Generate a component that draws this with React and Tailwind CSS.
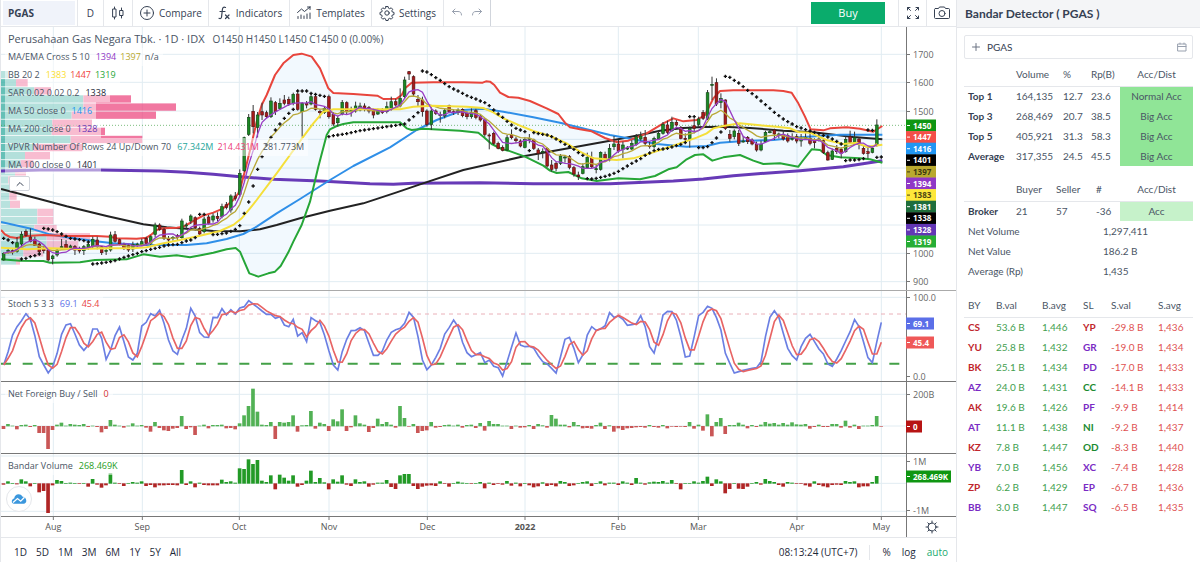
import clsx from "clsx";

// Chart coordinates are thirds of a pixel, one bar every STEP units.
const LEFT = 3;
const WIDTH = 2715;
const STEP = 13.365;
const barX = (i) => 11 + i * STEP;

const months = [
  { x: 160, label: "Aug" },
  { x: 427, label: "Sep" },
  { x: 718, label: "Oct" },
  { x: 987, label: "Nov" },
  { x: 1282, label: "Dec" },
  { x: 1575, label: "2022", bold: true },
  { x: 1855, label: "Feb" },
  { x: 2095, label: "Mar" },
  { x: 2391, label: "Apr" },
  { x: 2644, label: "May" },
];

// open, close, high, low
const candles = [
  [780, 760, 757, 782], [752, 751, 746, 761], [752, 753, 748, 764], [754, 728, 711, 758],
  [732, 703, 694, 740], [694, 706, 688, 710], [711, 724, 685, 727], [719, 736, 710, 738],
  [732, 755, 728, 762], [745, 752, 738, 760], [750, 780, 747, 784], [776, 768, 764, 793],
  [765, 750, 745, 770], [742, 740, 717, 746], [733, 745, 720, 750], [743, 738, 734, 748],
  [740, 750, 735, 765], [746, 753, 740, 760], [752, 740, 735, 765], [743, 733, 725, 750],
  [740, 718, 710, 745], [720, 740, 710, 748], [740, 758, 738, 765], [752, 751, 745, 765],
  [750, 705, 695, 755], [704, 724, 693, 728], [719, 732, 716, 736], [733, 746, 728, 750],
  [736, 750, 733, 756], [747, 733, 725, 756], [734, 732, 728, 742], [733, 725, 716, 738],
  [715, 730, 710, 736], [730, 710, 706, 735], [703, 675, 668, 712], [675, 688, 670, 692],
  [688, 715, 684, 720], [715, 720, 708, 732], [714, 712, 708, 722], [706, 712, 702, 720],
  [713, 663, 656, 716], [676, 675, 668, 688], [663, 648, 643, 672], [653, 683, 649, 692],
  [686, 702, 680, 706], [695, 657, 650, 700], [651, 670, 645, 674], [660, 648, 640, 668],
  [649, 655, 637, 664], [649, 620, 611, 655], [614, 622, 606, 628], [630, 588, 583, 638],
  [588, 595, 576, 602], [583, 520, 508, 590], [512, 413, 410, 516], [403, 352, 342, 408],
  [334, 380, 315, 400], [382, 345, 336, 412], [335, 345, 308, 360], [338, 350, 332, 354],
  [350, 303, 292, 354], [308, 335, 303, 345], [325, 310, 295, 330], [300, 310, 285, 316],
  [298, 312, 290, 318], [310, 283, 278, 316], [282, 328, 278, 332], [335, 310, 306, 410],
  [310, 315, 303, 325], [312, 290, 280, 316], [290, 328, 284, 332], [334, 338, 328, 355],
  [338, 325, 320, 342], [290, 350, 284, 356], [343, 372, 336, 378], [368, 355, 348, 380],
  [342, 307, 300, 346], [308, 335, 304, 342], [332, 331, 320, 350], [333, 318, 305, 338],
  [330, 318, 308, 334], [318, 328, 310, 334], [323, 333, 318, 340], [330, 345, 326, 355],
  [342, 332, 326, 345], [330, 337, 324, 342], [335, 320, 305, 340], [328, 305, 290, 332],
  [305, 315, 296, 320], [318, 295, 265, 322], [290, 240, 230, 296], [215, 222, 213, 240],
  [230, 282, 226, 290], [298, 305, 285, 320], [300, 335, 290, 350], [333, 373, 328, 380],
  [373, 333, 322, 390], [333, 340, 328, 345], [345, 344, 335, 368], [348, 332, 326, 355],
  [316, 335, 314, 340], [335, 336, 328, 345], [338, 330, 325, 345], [328, 347, 325, 352],
  [340, 350, 334, 358], [350, 338, 325, 356], [332, 352, 326, 358], [350, 360, 345, 365],
  [360, 403, 355, 410], [405, 408, 400, 448], [400, 430, 395, 435], [430, 445, 425, 448],
  [442, 451, 436, 454], [450, 413, 405, 453], [405, 413, 388, 418], [417, 422, 410, 430],
  [423, 438, 418, 442], [442, 418, 412, 445], [416, 415, 402, 430], [420, 445, 416, 450],
  [450, 460, 444, 480], [455, 454, 445, 475], [445, 498, 442, 502], [495, 508, 480, 515],
  [490, 505, 485, 514], [490, 468, 462, 495], [472, 471, 465, 488], [470, 502, 465, 508],
  [503, 522, 498, 530], [525, 530, 515, 540], [520, 500, 490, 523], [503, 472, 458, 506],
  [472, 500, 455, 505], [507, 506, 495, 520], [508, 457, 454, 512], [463, 480, 455, 486],
  [480, 445, 432, 484], [440, 432, 408, 450], [432, 453, 420, 458], [448, 435, 425, 475],
  [445, 444, 438, 450], [447, 430, 420, 450], [433, 410, 402, 437], [417, 408, 395, 422],
  [412, 430, 390, 436], [436, 440, 425, 446], [440, 415, 410, 446], [417, 400, 392, 420],
  [400, 373, 366, 404], [375, 397, 362, 402], [392, 367, 350, 396], [367, 375, 360, 380],
  [383, 415, 378, 418], [415, 416, 400, 424], [418, 385, 380, 443], [377, 385, 355, 400],
  [373, 357, 350, 380], [337, 355, 330, 360], [355, 278, 270, 360], [255, 253, 230, 300],
  [248, 312, 235, 318], [307, 295, 280, 325], [300, 385, 298, 390], [403, 415, 390, 425],
  [410, 393, 388, 418], [400, 430, 390, 438], [424, 423, 408, 428], [412, 425, 408, 432],
  [420, 432, 415, 436], [433, 450, 425, 455], [450, 433, 422, 454], [425, 397, 392, 428],
  [396, 395, 388, 400], [390, 402, 386, 420], [407, 402, 398, 415], [403, 417, 390, 422],
  [407, 423, 400, 428], [416, 415, 400, 422], [410, 423, 402, 430], [423, 417, 402, 440],
  [413, 412, 400, 420], [415, 430, 400, 436], [423, 428, 415, 445], [418, 417, 405, 425],
  [422, 457, 416, 462], [458, 480, 452, 482], [478, 453, 446, 480], [445, 455, 435, 462],
  [448, 460, 442, 475], [455, 418, 408, 458], [410, 427, 392, 430], [428, 413, 395, 432],
  [417, 430, 412, 448], [445, 460, 438, 464], [455, 460, 442, 476], [457, 445, 440, 460],
  [437, 375, 358, 440],
];

const upperBand = [
  [3, 690], [15, 703], [30, 711], [50, 714], [80, 708], [130, 705], [200, 708], [290, 708],
  [330, 710], [350, 715], [410, 716], [440, 713], [455, 703], [470, 690], [490, 685], [530, 683],
  [550, 680], [570, 669], [590, 657], [610, 647], [640, 638], [670, 625], [700, 600], [715, 580],
  [725, 550], [738, 500], [755, 430], [770, 365], [785, 315], [800, 285], [825, 225], [850, 190],
  [880, 165], [905, 161], [935, 170], [960, 205], [985, 265], [1000, 279], [1060, 282],
  [1132, 287], [1150, 297], [1190, 296], [1205, 285], [1215, 265], [1235, 248], [1300, 247],
  [1390, 247], [1448, 248], [1458, 244], [1470, 245], [1483, 255], [1500, 278], [1525, 291],
  [1555, 293], [1590, 303], [1640, 325], [1675, 342], [1695, 368], [1710, 382], [1740, 388],
  [1775, 394], [1815, 414], [1850, 426], [1885, 422], [1910, 412], [1940, 400], [1965, 385],
  [1990, 370], [2020, 355], [2050, 364], [2090, 360], [2115, 345], [2140, 295], [2160, 273],
  [2200, 271], [2250, 271], [2320, 271], [2350, 273], [2375, 278], [2395, 310], [2415, 350],
  [2432, 388], [2470, 391], [2490, 385], [2540, 382], [2580, 386], [2620, 395], [2647, 378],
];

const lowerBand = [
  [3, 778], [60, 782], [130, 783], [150, 788], [240, 787], [285, 780], [380, 778], [430, 763],
  [480, 770], [530, 766], [570, 772], [610, 764], [640, 758], [680, 748], [707, 744], [720, 755],
  [735, 790], [748, 820], [775, 830], [805, 820], [825, 815], [842, 798], [865, 757], [880, 725],
  [905, 675], [930, 605], [955, 500], [980, 405], [990, 388], [1010, 378], [1030, 372],
  [1060, 367], [1120, 367], [1200, 367], [1220, 385], [1235, 390], [1270, 386], [1380, 392],
  [1435, 398], [1450, 410], [1475, 432], [1505, 447], [1525, 452], [1575, 470], [1630, 497],
  [1650, 512], [1670, 519], [1705, 516], [1745, 535], [1790, 543], [1855, 535], [1920, 538],
  [1965, 528], [2005, 508], [2030, 502], [2060, 478], [2085, 465], [2110, 463], [2137, 482],
  [2170, 472], [2220, 465], [2260, 482], [2290, 492], [2340, 490], [2395, 500], [2410, 480],
  [2435, 448], [2460, 450], [2480, 465], [2520, 472], [2580, 475], [2610, 478], [2647, 488],
];

const middleBand = [
  [3, 743], [80, 748], [150, 745], [240, 747], [330, 745], [400, 745], [440, 742], [480, 732],
  [540, 720], [600, 707], [660, 693], [700, 675], [725, 655], [750, 625], [770, 600], [830, 520],
  [870, 465], [910, 410], [940, 370], [970, 335], [1000, 328], [1100, 328], [1200, 328],
  [1240, 320], [1300, 317], [1400, 320], [1450, 324], [1480, 337], [1510, 355], [1560, 377],
  [1600, 393], [1650, 408], [1700, 430], [1740, 455], [1780, 475], [1850, 480], [1900, 475],
  [1950, 460], [1990, 447], [2040, 430], [2090, 413], [2120, 400], [2140, 385], [2170, 378],
  [2220, 370], [2280, 376], [2330, 380], [2370, 385], [2395, 396], [2430, 398], [2480, 420],
  [2530, 432], [2570, 428], [2600, 440], [2647, 434],
];

const ma50 = [
  [3, 666], [100, 688], [150, 703], [200, 712], [300, 725], [340, 730], [440, 735], [560, 735],
  [620, 730], [680, 717], [730, 702], [770, 680], [830, 640], [900, 597], [990, 540], [1060, 498],
  [1170, 442], [1250, 390], [1310, 360], [1390, 330], [1450, 326], [1510, 335], [1600, 352],
  [1680, 368], [1760, 388], [1830, 405], [1900, 418], [1970, 432], [2060, 440], [2120, 438],
  [2160, 428], [2220, 424], [2320, 420], [2400, 412], [2520, 404], [2647, 404],
];

const ma100 = [
  [3, 567], [110, 595], [200, 619], [320, 648], [430, 673], [500, 682], [560, 686], [640, 693],
  [720, 694], [780, 688], [830, 675], [900, 655], [990, 632], [1090, 610], [1190, 577],
  [1260, 553], [1390, 510], [1575, 468], [1680, 449], [1830, 422], [1920, 405], [1980, 392],
  [2050, 384], [2110, 381], [2170, 380], [2250, 384], [2350, 392], [2440, 397], [2560, 411],
  [2647, 418],
];

const ma200 = [
  [3, 513], [120, 510], [300, 510], [480, 513], [560, 517], [640, 523], [720, 530], [820, 538],
  [960, 543], [1110, 551], [1180, 553], [1240, 550], [1440, 548], [1600, 551], [1830, 551],
  [2020, 543], [2110, 537], [2200, 527], [2400, 512], [2530, 500], [2647, 482],
];

// first bar of each run and the dots that follow it
const sar = [
  [0, [715, 720, 728]],
  [4, [777, 775, 770, 767, 762]],
  [9, [685, 687, 690, 695, 702, 709, 715, 717, 719, 722, 726]],
  [20, [792, 791, 789, 787, 785, 782, 777, 772, 768, 764, 760, 755, 752, 748, 745, 742, 738, 735, 734, 733, 728, 723, 720, 713]],
  [44, [643, 643]],
  [47, [704, 703, 701, 699, 694, 688, 677, 640, 606, 558, 508, 470, 435, 412, 390, 372, 355, 340, 328]],
  [66, [273, 273, 273, 280, 283, 286, 289]],
  [73, [410, 407, 405, 403, 401, 398, 395, 392, 390, 388, 386, 384, 382, 380, 378, 376, 374, 372, 360, 350, 338]],
  [94, [213, 216, 224, 233, 241, 251, 260, 267, 273, 280, 287, 292, 297, 303, 308, 317, 330, 342, 352, 364, 375, 385, 390, 395, 452]],
  [119, [398, 401, 403, 405, 410, 417, 425, 433, 440, 448, 458, 466]],
  [131, [536, 537, 535, 532, 529, 525, 520, 514, 506, 498, 490, 483, 476, 466, 459, 452]],
  [147, [448, 447, 445, 441, 437, 433, 428]],
  [154, [350, 350, 443, 443, 440, 428, 414, 396]],
  [162, [229, 232, 241, 249, 260, 271, 281, 291, 303, 314, 325, 337, 347, 357, 365, 372, 380, 384, 389, 393, 397, 401, 406, 411, 417, 424, 432]],
  [189, [482, 480, 480, 479, 476, 390, 391, 472, 471]],
];

// end of the up volume, end of the total, inside the value area
const profile = [
  [25, 30, false], [48, 83, true], [103, 153, true], [250, 393, true], [250, 528, true],
  [215, 468, true], [157, 276, true], [155, 315, true], [212, 427, true], [100, 247, true],
  [75, 150, true], [62, 100, true], [45, 78, false], [25, 50, false], [28, 50, false],
  [28, 50, false], [30, 60, false], [112, 160, false], [112, 160, false], [103, 170, false],
  [140, 270, false], [140, 235, false], [70, 130, false], [48, 60, false],
];

const stochK = [
  240, 200, 150, 125, 107, 86, 103, 152, 215, 240, 264, 245, 205, 148, 120, 116, 147, 180, 196,
  180, 132, 132, 160, 223, 195, 152, 126, 170, 216, 225, 205, 123, 112, 86, 93, 76, 115, 165,
  198, 208, 165, 130, 70, 93, 143, 156, 157, 97, 98, 71, 90, 74, 87, 69, 65, 47, 57, 67, 78, 88,
  88, 100, 95, 120, 125, 103, 153, 143, 170, 98, 107, 113, 150, 197, 240, 255, 200, 163, 137,
  136, 128, 137, 175, 211, 211, 198, 165, 142, 134, 130, 115, 82, 97, 155, 225, 254, 240, 217,
  190, 147, 128, 105, 125, 172, 203, 215, 209, 203, 233, 225, 244, 248, 273, 230, 187, 144, 180,
  185, 184, 190, 212, 230, 237, 250, 264, 215, 163, 157, 190, 233, 210, 150, 125, 136, 132, 122,
  83, 97, 93, 103, 121, 119, 116, 92, 125, 185, 204, 153, 90, 79, 80, 105, 155, 216, 213, 155,
  92, 82, 64, 70, 98, 135, 205, 235, 264, 260, 256, 253, 250, 248, 230, 155, 97, 77, 97, 145,
  190, 212, 225, 185, 160, 148, 170, 192, 207, 237, 244, 222, 197, 168, 140, 104, 125, 170, 218,
  233, 170, 112,
];

const foreignFlow = [
  -8, 6, 1, -9, 3, 4, -2, 3, -20, -20, -68, -11, 4, 10, 1, 6, 4, 3, 6, -2, 1, -2, -18, -8, 18, 4,
  1, -4, 1, 8, 1, 3, -4, -16, 12, -5, -12, -14, -7, -5, 30, -8, -3, -26, 1, 4, -6, 3, 3, 4, -6,
  -5, -9, 8, 32, 60, 112, 43, 4, 3, 12, -38, 12, 10, 12, 32, -16, 2, 3, 45, -7, 10, 6, -14, 20,
  14, 50, -14, -3, 32, 8, 4, -17, -5, 22, 6, 12, 4, -4, 60, 24, -1, 6, -20, -14, -12, 12, -4, -2,
  3, 4, 1, 4, -4, 3, 4, -5, 9, -13, 15, 6, 6, 1, 1, -8, 1, -4, -3, 3, -8, 6, 2, -4, 33, 22, 4, 4,
  -3, 12, 3, -6, -5, -7, 3, 10, -8, 2, -16, -6, -11, -6, -5, -3, -2, -4, 3, -2, -4, 3, -6, -1,
  -2, -1, -2, 12, -7, 4, -13, 35, -30, 12, 24, -23, 3, 3, 10, 4, -6, 3, -2, 4, 12, 7, 9, 4, 9, 4,
  11, 5, 4, 6, -7, -2, 4, -2, -2, 6, 6, -4, 16, -4, 4, -8, 1, 1, 3, 30, -1,
];

const bandarVolume = [
  -3, 6, 1, -2, 12, 6, -8, 1, -26, -22, -88, -5, 10, 7, 1, 2, 1, -1, 1, -9, 13, -3, -12, -5, 30,
  2, -1, -7, 1, 4, 2, 6, -7, -4, -11, -5, -5, -4, -4, -5, 40, -4, 6, -11, 2, -4, -5, -5, -5, 11,
  4, 6, 2, 45, 43, 72, 58, 70, 8, 4, 24, -17, 26, 17, 8, 24, -9, -4, 8, 38, 4, 16, 3, -17, 12, 5,
  24, -3, -7, 12, 4, 6, -9, -3, 2, 2, 10, -10, -16, 24, 28, 28, -7, -16, -9, -6, -5, -7, 6, -1,
  -9, 1, 5, 2, 1, -1, 1, 4, -14, 2, -4, -1, -3, 7, -6, 2, -8, 1, -5, -11, -8, 3, -7, -4, -8, 7,
  4, -7, -5, 1, 4, 6, -7, 1, 6, -5, 2, 2, -4, 6, 2, -4, 16, 2, -3, 3, 5, 4, 7, 2, 10, -1, -17, 1,
  1, 6, 2, 7, 20, -7, 12, 6, -29, -16, 1, -15, -16, -9, 1, 4, -3, 13, 7, 4, -4, -9, 4, 2, -1, -1,
  -5, -9, 6, -4, -8, -11, -4, -3, -4, 7, 4, 6, -11, -8, -8, 4, 22,
];

const toPath = (points) => "M" + points.map(([x, y]) => `${x} ${y}`).join("L");
const series = (values) => toPath(values.map((y, i) => [barX(i), y]));

const sma = (values, n) =>
  values.map((_, i) => {
    const part = values.slice(Math.max(0, i - n + 1), i + 1);
    return part.reduce((a, b) => a + b, 0) / part.length;
  });

const ema = (values, n) => {
  const k = 2 / (n + 1);
  let last = values[0];
  return values.map((v) => (last = v * k + last * (1 - k)));
};

const closes = candles.map((c) => c[1]);

function Grid({ top, height, lines }) {
  return (
    <g stroke="#e1ecf2" strokeWidth="3">
      {months.map((m) => (
        <path key={m.label} d={`M${m.x} ${top}v${height}`} />
      ))}
      {lines.map((y) => (
        <path key={y} d={`M${LEFT} ${y}h${WIDTH}`} />
      ))}
    </g>
  );
}

function Plot({ top, height, lines, label, children }) {
  return (
    <svg
      className="block h-full w-full"
      viewBox={`${LEFT} ${top} ${WIDTH} ${height}`}
      preserveAspectRatio="none"
      fill="none"
      role="img"
      aria-label={label}
    >
      <Grid top={top} height={height} lines={lines} />
      {children}
    </svg>
  );
}

function Pane({ className, plot, axis, children }) {
  return (
    <section className={clsx("flex border-b", className)}>
      <div className="relative min-w-0 flex-1">
        {plot}
        {children}
      </div>
      <svg className="block h-full w-[50px] shrink-0" role="img" aria-label="Scale">
        <path d="M.5 0v300" stroke="#777" />
        {axis}
      </svg>
    </section>
  );
}

function Tick({ y, children }) {
  return (
    <g>
      <path d={`M1 ${y}h3`} stroke="#777" />
      <text x="7" y={y + 3} fill="#666" fontSize="9">
        {children}
      </text>
    </g>
  );
}

function Tag({ y, width = 30, height = 12, color, text = "#fff", children }) {
  return (
    <g>
      <rect y={y - height / 2} width={width} height={height} fill={color} />
      <path d={`M1 ${y}h3`} stroke={text} />
      <text x="7" y={y + 3} fill={text} fontSize="8" fontWeight="700">
        {children}
      </text>
    </g>
  );
}

const priceTags = [
  [1450, "#0f9612"],
  [1447, "#f44f49"],
  [1416, "#2196f3"],
  [1401, "#000"],
  [1397, "#b9a92f", "#3d3810"],
  [1394, "#9038c6"],
  [1383, "#fde73a", "#4d4611"],
  [1381, "#1f6e3c"],
  [1338, "#000"],
  [1328, "#6236b5"],
  [1319, "#26ad35"],
];

function PriceAxis() {
  return (
    <>
      <Tick y={27.5}>1700</Tick>
      <Tick y={55.5}>1600</Tick>
      <Tick y={84.5}>1500</Tick>
      <Tick y={226.5}>1000</Tick>
      <Tick y={254.5}>900</Tick>
      {priceTags.map(([price, color, text], i) => (
        <Tag key={price} y={98.5 + i * 11.6} color={color} text={text}>
          {price}
        </Tag>
      ))}
    </>
  );
}

function PricePlot() {
  const band = toPath([...upperBand, ...[...lowerBand].reverse()]) + "Z";
  const dots = sar
    .flatMap(([start, ys]) => ys.map((y, i) => `M${barX(start + i) - 5} ${y}h10m-5-5v10`))
    .join("");
  return (
    <Plot
      top={81}
      height={789}
      lines={[163, 247, 333, 418, 504, 589, 675, 760, 845]}
      label="PGAS daily price"
    >
      <path d={band} fill="#2196f3" fillOpacity=".06" />
      {profile.map(([up, total, valueArea], i) => (
        <g key={i} opacity={valueArea ? 0.7 : 0.32}>
          <rect x={LEFT} y={213 + i * 24.3} width={up - LEFT} height="22" fill="#26a69a" />
          <rect x={up} y={213 + i * 24.3} width={total - up} height="22" fill="#ec407a" />
        </g>
      ))}
      <path d="M3 376H2718" stroke="#43a047" strokeWidth="3" strokeDasharray="3 6" opacity=".7" />
      <g strokeLinejoin="round">
        <path d={toPath(ma200)} stroke="#673ab7" strokeWidth="9" />
        <path d={toPath(ma100)} stroke="#222" strokeWidth="6" />
        <path d={toPath(ma50)} stroke="#2f8fe8" strokeWidth="6" />
        <path d={toPath(upperBand)} stroke="#e8453c" strokeWidth="6" />
        <path d={toPath(lowerBand)} stroke="#26a637" strokeWidth="6" />
      </g>
      {candles.map(([open, close, high, low], i) => (
        <g key={i}>
          <path d={`M${barX(i)} ${high}V${low}`} stroke="#333" strokeWidth="3" />
          <rect
            x={barX(i) - 4}
            y={Math.min(open, close)}
            width="8"
            height={Math.max(3, Math.abs(open - close))}
            fill={close <= open ? "#1b8a22" : "#a81a1a"}
            stroke={close <= open ? "#14491a" : "#551414"}
            strokeWidth="2"
          />
        </g>
      ))}
      <path d={series(ema(closes, 10))} stroke="#b9a93a" strokeWidth="4" />
      <path d={toPath(middleBand)} stroke="#f5df3a" strokeWidth="6" />
      <path d={series(sma(closes, 5))} stroke="#9a3fc4" strokeWidth="4" />
      <path d={dots} stroke="#111" strokeWidth="4" />
    </Plot>
  );
}

function BarsPlot({ values, base, up, down, ...rest }) {
  return (
    <Plot {...rest}>
      {values.map((v, i) => (
        <rect
          key={i}
          x={barX(i) - 6}
          y={v > 0 ? base - v : base}
          width="11"
          height={Math.abs(v) + 1}
          fill={v > 0 ? up : down}
        />
      ))}
    </Plot>
  );
}

const indicators = [
  ["MA/EMA Cross 5 10", ["1394", "text-[#9038c6]"], ["1397", "text-[#b9a92f]"], ["n/a", "text-gray-600"]],
  ["BB 20 2", ["1383", "text-[#fbe030]"], ["1447", "text-[#f0443c]"], ["1319", "text-[#26a637]"]],
  ["SAR 0.02 0.02 0.2", ["1338", "text-gray-800"]],
  ["MA 50 close 0", ["1416", "text-[#2196f3]"]],
  ["MA 200 close 0", ["1328", "text-[#673ab7]"]],
  [
    "VPVR Number Of Rows 24 Up/Down 70",
    ["67.342M", "text-[#26a69a]"],
    ["214.431M", "text-[#ec407a]"],
    ["281.773M", "text-gray-600"],
  ],
  ["MA 100 close 0", ["1401", "text-gray-800"]],
];

function Legend({ name, values }) {
  return (
    <div className="flex h-[18px] items-center gap-1 bg-white/50 pr-1 pl-[3px] whitespace-nowrap text-gray-600">
      <span className="pr-[2px]">{name}</span>
      {values.map(([value, color]) => (
        <span key={value} className={color}>
          {value}
        </span>
      ))}
    </div>
  );
}

const icon = {
  fill: "none",
  stroke: "currentColor",
  strokeLinecap: "round",
  strokeLinejoin: "round",
  "aria-hidden": true,
};

const CandlesIcon = () => (
  <svg {...icon} className="h-4 w-4" viewBox="0 0 16 16">
    <path d="M4.5 2v12M11.5 3v2.5M11.5 10.5V13" />
    <rect x="3" y="4" width="3" height="8" fill="#fff" />
    <rect x="10" y="5.5" width="3" height="5" fill="#fff" />
  </svg>
);

const CompareIcon = () => (
  <svg {...icon} className="h-4 w-4" viewBox="0 0 16 16">
    <circle cx="8" cy="8" r="6.5" />
    <path d="M8 5v6M5 8h6" />
  </svg>
);

const FunctionIcon = () => (
  <svg {...icon} className="h-4 w-4" viewBox="0 0 16 16" strokeWidth="1.2">
    <path d="M9.5 2.5C7.5 1.6 6.6 2.6 6.4 4.5L5.6 11.5C5.4 13.4 4.5 14 3 13.3M4 6.5h5M9.5 10l3.5 3.5M13 10l-3.5 3.5" />
  </svg>
);

const TemplatesIcon = () => (
  <svg {...icon} className="h-4 w-4" viewBox="0 0 16 16">
    <path d="M1.5 7.5L5.5 4l3 2.500L14 2M14 2h-2.5M14 2v2.5M2 13.5v-2M5 13.5V10M8 13.5V11M11 13.5V9M14 13.5V8" />
  </svg>
);

const GearIcon = () => (
  <svg {...icon} className="h-4 w-4" viewBox="0 0 16 16">
    <circle cx="8" cy="8" r="2.2" />
    <path d="M6.9 1.500h2.200l.4 1.700 1.200.5 1.500-.9 1.500 1.500-.9 1.500.5 1.200 1.700.4v2.200l-1.700.4-.5 1.200.9 1.500-1.500 1.500-1.500-.9-1.200.5-.4 1.700H6.900l-.4-1.700-1.200-.5-1.500.9-1.500-1.500.9-1.500-.5-1.200L1 9.600V7.400L2.700 7l.5-1.200-.9-1.500 1.500-1.500 1.500.9 1.200-.5z" />
  </svg>
);

const UndoIcon = ({ flip }) => (
  <svg {...icon} className={clsx("h-3 w-3", flip && "-scale-x-100")} viewBox="0 0 12 12">
    <path d="M4 2L1.5 4.5 4 7M1.5 4.5H7c2.300 0 3.5 1.200 3.5 3.5" />
  </svg>
);

const FullscreenIcon = () => (
  <svg {...icon} className="h-4 w-4" viewBox="0 0 16 16">
    <path d="M2.5 5V2.5H5M2.5 2.5l3 3M11 2.5h2.5V5M13.5 2.5l-3 3M2.5 11v2.5H5M2.5 13.5l3-3M13.5 11v2.5H11M13.5 13.5l-3-3" />
  </svg>
);

const CameraIcon = () => (
  <svg {...icon} className="h-[18px] w-[18px]" viewBox="0 0 18 18">
    <path d="M2.5 4.5h3L6.5 3h5l1 1.5h3c.6 0 1 .4 1 1v8c0 .6-.4 1-1 1h-13c-.6 0-1-.4-1-1v-8c0-.6.4-1 1-1z" />
    <circle cx="9" cy="9.5" r="3" />
  </svg>
);

const SunIcon = () => (
  <svg {...icon} className="h-[14px] w-[14px]" viewBox="0 0 14 14">
    <circle cx="7" cy="7" r="4" />
    <path d="M7 1v2M7 11v2M1 7h2M11 7h2M2.8 2.8l1.300 1.300M9.900 9.900l1.300 1.300M2.8 11.2l1.300-1.300M9.900 4.100l1.300-1.300" />
  </svg>
);

const CalendarIcon = () => (
  <svg {...icon} className="h-[10px] w-[10px] text-gray-400" viewBox="0 0 10 10">
    <path d="M1 2h8v7H1zM1 4.5h8M3 1v1M7 1v1" />
  </svg>
);

function ToolButton({ className, children, ...rest }) {
  return (
    <button
      type="button"
      className={clsx(
        "flex h-full items-center justify-center gap-1 border-r border-gray-200 whitespace-nowrap",
        className
      )}
      {...rest}
    >
      {children}
    </button>
  );
}

function Toolbar() {
  return (
    <header className="flex h-[27px] items-center border-b border-gray-200 pl-[2px] text-[10px] text-gray-700">
      <button type="button" className="mr-[2px] h-6 w-[72px] bg-[#f0f3fa] pl-[5px] text-left font-bold">
        PGAS
      </button>
      <ToolButton className="w-[27px] border-l">D</ToolButton>
      <ToolButton className="w-[29px]" aria-label="Chart type">
        <CandlesIcon />
      </ToolButton>
      <ToolButton className="w-[76px]">
        <CompareIcon /> Compare
      </ToolButton>
      <ToolButton className="w-[81px]">
        <FunctionIcon /> Indicators
      </ToolButton>
      <ToolButton className="w-[82px]">
        <TemplatesIcon /> Templates
      </ToolButton>
      <ToolButton className="w-[72px]">
        <GearIcon /> Settings
      </ToolButton>
      <div className="flex h-full w-[47px] items-center justify-center gap-2 border-r border-gray-300 text-gray-400">
        <button type="button" aria-label="Undo">
          <UndoIcon />
        </button>
        <button type="button" aria-label="Redo">
          <UndoIcon flip />
        </button>
      </div>
      <button type="button" className="ml-auto h-[22px] w-[74px] bg-[#0aac6c] text-[11px] text-white">
        Buy
      </button>
      <ToolButton className="ml-[13px] w-[29px] border-l" aria-label="Fullscreen">
        <FullscreenIcon />
      </ToolButton>
      <button type="button" className="flex w-[29px] justify-center" aria-label="Take a snapshot">
        <CameraIcon />
      </button>
    </header>
  );
}

function TimeAxis() {
  return (
    <div className="flex h-[21px] border-b border-gray-200">
      <svg className="block h-full min-w-0 flex-1 text-[9px]" role="img" aria-label="Time scale">
        {months.map((m) => {
          const x = `${((m.x - LEFT) / WIDTH) * 100}%`;
          return (
            <g key={m.label}>
              <line x1={x} x2={x} y1="0" y2="3" stroke="#777" />
              <text x={x} y="13" textAnchor="middle" fill="#555" fontWeight={m.bold ? 700 : 400}>
                {m.label}
              </text>
            </g>
          );
        })}
      </svg>
      <div className="flex w-[50px] items-center justify-center border-l border-[#777] text-gray-700">
        <button type="button" aria-label="Scale settings">
          <SunIcon />
        </button>
      </div>
    </div>
  );
}

function Footer() {
  return (
    <footer className="flex h-6 items-center pt-1 pr-2 pl-[13px] text-[10px] text-gray-800">
      <div className="flex gap-[9px]">
        {["1D", "5D", "1M", "3M", "6M", "1Y", "5Y", "All"].map((range) => (
          <button key={range} type="button">
            {range}
          </button>
        ))}
      </div>
      <span className="ml-auto border-r border-gray-200 pr-3">08:13:24 (UTC+7)</span>
      <div className="ml-3 flex gap-[11px]">
        <button type="button">%</button>
        <button type="button">log</button>
        <button type="button" className="text-[#22ab6f]">
          auto
        </button>
      </div>
    </footer>
  );
}

function Chart() {
  const stochD = sma(stochK, 3);
  return (
    <main className="min-w-0 flex-1 border-l border-gray-200 font-['Open_Sans',sans-serif]">
      <Toolbar />
      <Pane className="h-[264px] border-[#aaa] text-[9px]" plot={<PricePlot />} axis={<PriceAxis />}>
        <div className="absolute top-[3px] left-1 flex flex-col items-start">
          <div className="flex h-[18px] items-center gap-1 pl-[3px] whitespace-nowrap text-gray-600">
            <h1 className="pr-1 text-[11px]">Perusahaan Gas Negara Tbk. · 1D · IDX</h1>
            <span className="text-[10px]">O1450 H1450 L1450 C1450 0 (0.00%)</span>
          </div>
          {indicators.map(([name, ...values]) => (
            <Legend key={name} name={name} values={values} />
          ))}
          <button
            type="button"
            aria-label="Collapse legend"
            className="mt-[2px] ml-1 flex h-[15px] w-[21px] items-center justify-center rounded-xs border border-gray-300 bg-white text-gray-700"
          >
            <svg {...icon} className="h-2 w-2" viewBox="0 0 8 8">
              <path d="M1 5.5l3-3 3 3" />
            </svg>
          </button>
        </div>
      </Pane>
      <Pane
        className="h-[91px] border-[#777] text-[9px]"
        plot={
          <Plot top={18} height={270} lines={[37, 160]} label="Stochastic 5 3 3">
            <path d="M3 87H2718" stroke="#eab0b8" strokeWidth="3" strokeDasharray="12 12" />
            <path d="M3 236H2718" stroke="#43a047" strokeWidth="6" strokeDasharray="30 35" />
            <path d={series(stochK)} stroke="#6b7fe3" strokeWidth="5" />
            <path d={series(stochD)} stroke="#e86464" strokeWidth="5" />
          </Plot>
        }
        axis={
          <>
            <Tick y={6.5}>100.0</Tick>
            <Tick y={85.5}>0.0</Tick>
            <Tag y={32.5} width={28} color="#5b6fe8">
              69.1
            </Tag>
            <Tag y={51.5} width={28} color="#ef5858">
              45.4
            </Tag>
          </>
        }
      >
        <div className="absolute top-1 left-1">
          <Legend name="Stoch 5 3 3" values={[["69.1", "text-[#5b6fe8]"], ["45.4", "text-[#e84545]"]]} />
        </div>
      </Pane>
      <Pane
        className="h-[72px] border-[#777] text-[9px]"
        plot={
          <BarsPlot
            top={6}
            height={213}
            lines={[43, 138]}
            label="Net foreign buy and sell"
            values={foreignFlow}
            base={138}
            up="#52b155"
            down="#c95656"
          />
        }
        axis={
          <>
            <Tick y={12.5}>200B</Tick>
            <Tag y={44.5} width={16} color="#b71414">
              0
            </Tag>
          </>
        }
      >
        <div className="absolute top-[3px] left-1">
          <Legend name="Net Foreign Buy / Sell" values={[["0", "text-[#d32f2f]"]]} />
        </div>
      </Pane>
      <Pane
        className="h-[63px] border-[#777] text-[9px]"
        plot={
          <BarsPlot
            top={222}
            height={186}
            lines={[228, 310, 394]}
            label="Bandar volume"
            values={bandarVolume}
            base={310}
            up="#229a26"
            down="#b02525"
          />
        }
        axis={
          <>
            <Tick y={7.5}>1M</Tick>
            <Tick y={56.5}>-1M</Tick>
            <Tag y={22.5} width={45} color="#0f9612">
              268.469K
            </Tag>
          </>
        }
      >
        <div className="absolute top-[3px] left-1">
          <Legend name="Bandar Volume" values={[["268.469K", "text-[#1f9d23]"]]} />
        </div>
        <a
          href="#tradingview"
          aria-label="TradingView"
          className="absolute top-8 left-[5px] flex h-[26px] w-[26px] items-center justify-center rounded-full border border-gray-200 bg-white"
        >
          <svg className="h-4 w-4" viewBox="0 0 16 16" aria-hidden="true">
            <path d="M.8 10.5C.8 8.8 1.9 7.8 3.2 7.6 3.4 5 5.2 3.3 7.6 3.3c1.700 0 3 .8 3.700 2.200C13.700 5.6 15.300 7.5 15.300 9.800c0 1.600-1 2.900-2.600 2.900H3C1.700 12.700.8 11.800.8 10.500z" fill="#3b97dd" />
            <path d="M2 11.5l4.500-4 3.200 2.700 3.800-4" fill="none" stroke="#fff" strokeWidth="1.3" />
          </svg>
        </a>
      </Pane>
      <TimeAxis />
      <Footer />
    </main>
  );
}

const accumulation = [
  ["Top 1", "164,135", "12.7", "23.6", "Normal Acc"],
  ["Top 3", "268,469", "20.7", "38.5", "Big Acc"],
  ["Top 5", "405,921", "31.3", "58.3", "Big Acc"],
  ["Average", "317,355", "24.5", "45.5", "Big Acc"],
];

const totals = [
  ["Net Volume", "1,297,411"],
  ["Net Value", "186.2 B"],
  ["Average (Rp)", "1,435"],
];

const red = "text-[#c0262d]";
const violet = "text-[#7a2bc4]";
const green = "text-[#1b8a2f]";

const brokers = [
  ["CS", red, "53.6 B", "1,446", "YP", red, "-29.8 B", "1,436"],
  ["YU", red, "25.8 B", "1,432", "GR", violet, "-19.0 B", "1,434"],
  ["BK", red, "25.1 B", "1,434", "PD", violet, "-17.0 B", "1,433"],
  ["AZ", violet, "24.0 B", "1,431", "CC", green, "-14.1 B", "1,433"],
  ["AK", red, "19.6 B", "1,426", "PF", violet, "-9.9 B", "1,414"],
  ["AT", violet, "11.1 B", "1,438", "NI", green, "-9.2 B", "1,437"],
  ["KZ", red, "7.8 B", "1,447", "OD", green, "-8.3 B", "1,440"],
  ["YB", violet, "7.0 B", "1,456", "XC", violet, "-7.4 B", "1,428"],
  ["ZP", red, "6.2 B", "1,429", "EP", violet, "-6.7 B", "1,436"],
  ["BB", violet, "3.0 B", "1,447", "SQ", violet, "-6.5 B", "1,435"],
];

function Sidebar() {
  return (
    <aside className="w-[244px] shrink-0 border-l border-gray-200 bg-white font-[Lato,sans-serif] text-[10px] text-gray-600">
      <h2 className="flex h-[28px] items-center border-b border-gray-200 bg-[#f4f5f7] pl-[8px] text-[12px] font-bold text-gray-700">
        Bandar Detector ( PGAS )
      </h2>
      <div className="px-[7px]">
        <label className="mt-[7px] flex h-6 items-center rounded-xs border border-gray-200 px-[5px]">
          <svg {...icon} className="mx-[2px] h-2 w-2 text-gray-500" viewBox="0 0 8 8">
            <path d="M4 .5v7M.5 4h7" />
          </svg>
          <input
            aria-label="Stock code"
            defaultValue="PGAS"
            className="min-w-0 flex-1 pl-[5px] text-gray-700 outline-none"
          />
          <CalendarIcon />
        </label>

        <table className="mt-[5px] w-full table-fixed text-left">
          <thead>
            <tr className="h-[22px] border-b border-gray-200">
              <th className="w-[47px]" aria-label="Rank" />
              <th className="w-[47px] pl-[5px] font-normal">Volume</th>
              <th className="w-[29px] pl-[5px] font-normal">%</th>
              <th className="w-[33px] pl-[4px] font-normal">Rp(B)</th>
              <th className="text-center font-normal">Acc/Dist</th>
            </tr>
          </thead>
          <tbody>
            {accumulation.map(([rank, volume, percent, value, status]) => (
              <tr key={rank} className="h-5">
                <th className="pl-1 font-bold text-gray-700">{rank}</th>
                <td className="pl-[5px]">{volume}</td>
                <td className="pl-[5px]">{percent}</td>
                <td className="pl-[4px]">{value}</td>
                <td className="bg-[#90e597] text-center">{status}</td>
              </tr>
            ))}
          </tbody>
        </table>

        <table className="mt-[13px] w-full table-fixed text-left">
          <thead>
            <tr className="h-[22px] border-b border-gray-200">
              <th className="w-[47px]" aria-label="Side" />
              <th className="w-[40px] pl-[5px] font-normal">Buyer</th>
              <th className="w-[40px] pl-[5px] font-normal">Seller</th>
              <th className="w-[29px] pl-[5px] font-normal">#</th>
              <th className="text-center font-normal">Acc/Dist</th>
            </tr>
          </thead>
          <tbody>
            <tr className="h-5">
              <th className="pl-1 font-bold text-gray-700">Broker</th>
              <td className="pl-[5px]">21</td>
              <td className="pl-[5px]">57</td>
              <td className="pl-[5px]">-36</td>
              <td className="bg-[#c6f2ca] text-center">Acc</td>
            </tr>
          </tbody>
        </table>
        <dl>
          {totals.map(([name, value]) => (
            <div key={name} className="flex h-5 items-center pl-1">
              <dt className="w-[135px]">{name}</dt>
              <dd>{value}</dd>
            </div>
          ))}
        </dl>

        <table className="mt-[14px] w-full table-fixed text-left">
          <thead>
            <tr className="h-[22px] border-b border-gray-200">
              <th className="w-[28px] pl-1 font-normal">BY</th>
              <th className="w-[46px] pl-1 font-normal">B.val</th>
              <th className="w-[41px] pl-1 font-normal">B.avg</th>
              <th className="w-[28px] pl-1 font-normal">SL</th>
              <th className="w-[47px] pl-1 font-normal">S.val</th>
              <th className="pl-1 font-normal">S.avg</th>
            </tr>
          </thead>
          <tbody>
            {brokers.map(([buyer, buyerColor, bval, bavg, seller, sellerColor, sval, savg]) => (
              <tr key={buyer} className="h-5">
                <td className={clsx("pl-1 font-bold", buyerColor)}>{buyer}</td>
                <td className="pl-1 text-[#43a04f]">{bval}</td>
                <td className="pl-1 text-[#43a04f]">{bavg}</td>
                <td className={clsx("pl-1 font-bold", sellerColor)}>{seller}</td>
                <td className="pl-1 text-[#e05252]">{sval}</td>
                <td className="pl-1 text-[#e05252]">{savg}</td>
              </tr>
            ))}
          </tbody>
        </table>
      </div>
    </aside>
  );
}

export default function App() {
  return (
    <div className="flex min-h-screen bg-white">
      <Chart />
      <Sidebar />
    </div>
  );
}
